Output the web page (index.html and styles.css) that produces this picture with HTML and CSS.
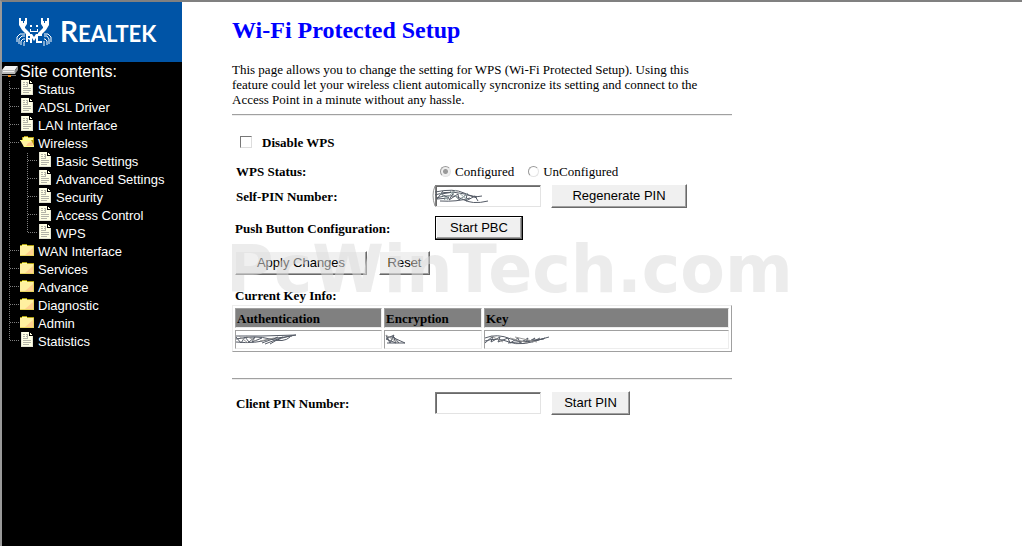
FILE: index.html
```html
<!DOCTYPE html>
<html lang="en">
<head>
<meta charset="utf-8">
<title>Wi-Fi Protected Setup</title>
<link rel="stylesheet" href="styles.css">
</head>
<body>
<svg class="defs" aria-hidden="true">
  <symbol id="page" viewBox="0 0 14 16">
    <path d="M1 0h8v4h4v11H1z" fill="#ffffe4"/>
    <path d="M10 1h1v1h1v1h-2z" fill="#ffffe4"/>
    <path d="M1 0h1v15H1zM12 4h1v11h-1zM1 14h12v1H1z" fill="#e4e4d4"/>
    <path d="M3 2h2v1H3zM6 2h2v1H6zM3 4h2v1H3zM6 4h2v1H6zM3 6h5v1H3zM7 2h1v5H7zM3 8h8v1H3zM3 10h8v1H3zM3 12h6v1H3z" fill="#b4b4a8"/>
  </symbol>
  <symbol id="folder" viewBox="0 0 14 16">
    <path d="M0 3h2V2h5v1h7v11H0z" fill="#b0a010"/>
    <path d="M1 4h12v10H0V4z" fill="#fff0a0"/>
    <path d="M2 3h5v1H2z" fill="#ffff9c"/>
    <path d="M13 6v7H5z" fill="#ffd090"/>
    <path d="M0 13h14v1H0zM13 4h1v10h-1z" fill="#e8d460"/>
  </symbol>
  <symbol id="folder-open" viewBox="0 0 14 16">
    <path d="M2 3h2V2h4v1h6v10H4L2 8z" fill="#b89c10"/>
    <path d="M4 3h4v1h5v2H3V4z" fill="#ffff9c"/>
    <path d="M0 6h11l3 6v1H4z" fill="#fff0a0"/>
    <path d="M8 9l4-1 1 4H6z" fill="#ffc888"/>
    <path d="M0 6h11v1H0zM4 12h10v1H4z" fill="#ffff80"/>
  </symbol>
  <symbol id="drive" viewBox="0 0 16 16">
    <path d="M3 2h13l-3 4H0z" fill="#f2f2f2"/>
    <path d="M0 6h13v4H0z" fill="#b8b8b8"/>
    <path d="M13 6l3-4v4l-3 4z" fill="#888"/>
    <path d="M1 7h11v1H1z" fill="#eee"/>
    <path d="M0 11h14v1H0z" fill="#777"/>
    <path d="M6 11h3v2H6z" fill="#ee8918"/>
  </symbol>
</svg>
<div class="layout">
  <aside class="sidebar">
    <div class="brand">
      <svg class="crab" viewBox="0 0 36 30" role="img" aria-label="Realtek crab">
        <g fill="#fff">
          <path d="M3 1h2v3h2v2h1V4h1V1h2v6l-2 3v1l5 5v2h-3l-5-5-3-5V5z"/>
          <path d="M33 1h-2v3h-2v2h-1V4h-1V1h-2v6l2 3v1l-5 5v2h3l5-5 3-5V5z"/>
          <path d="M14 8h2v2h-2zM20 8h2v2h-2z"/>
          <path d="M14 12h1v2h6v-2h1v3h-8z"/>
          <path d="M10 17h6l2 3 2-3h6v2h-4v5h4v2h-6v-5l-2 3-2-3v5h-2v-3l-2-1v3h-2zM12 19v2h2v-2z" fill-rule="evenodd"/>
        </g>
        <path d="M9 17H4L1 20v5M9 19H6l-3 3v5M9 22H7l-2 2v4M9 24l-1 1v4M28 17h4l3 3v5M28 19h3l2 3v5M28 22h1l2 2v4M28 24v5" fill="none" stroke="#fff"/>
      </svg>
      <span class="wordmark"><span class="wordmark-cap">R</span>EALTEK</span>
    </div>
    <nav class="tree">
      <div class="tree-title"><svg class="icon-drive"><use href="#drive"/></svg>Site contents:</div>
      <ul class="branch">
        <li><a href="#"><svg class="icon"><use href="#page"/></svg>Status</a></li>
        <li><a href="#"><svg class="icon"><use href="#page"/></svg>ADSL Driver</a></li>
        <li><a href="#"><svg class="icon"><use href="#page"/></svg>LAN Interface</a></li>
        <li><a href="#"><svg class="icon"><use href="#folder-open"/></svg>Wireless</a>
          <ul class="branch">
            <li><a href="#"><svg class="icon"><use href="#page"/></svg>Basic Settings</a></li>
            <li><a href="#"><svg class="icon"><use href="#page"/></svg>Advanced Settings</a></li>
            <li><a href="#"><svg class="icon"><use href="#page"/></svg>Security</a></li>
            <li><a href="#"><svg class="icon"><use href="#page"/></svg>Access Control</a></li>
            <li><a href="#"><svg class="icon"><use href="#page"/></svg>WPS</a></li>
          </ul>
        </li>
        <li><a href="#"><svg class="icon"><use href="#folder"/></svg>WAN Interface</a></li>
        <li><a href="#"><svg class="icon"><use href="#folder"/></svg>Services</a></li>
        <li><a href="#"><svg class="icon"><use href="#folder"/></svg>Advance</a></li>
        <li><a href="#"><svg class="icon"><use href="#folder"/></svg>Diagnostic</a></li>
        <li><a href="#"><svg class="icon"><use href="#folder"/></svg>Admin</a></li>
        <li><a href="#"><svg class="icon"><use href="#page"/></svg>Statistics</a></li>
      </ul>
    </nav>
  </aside>
  <main class="content">
    <h1>Wi-Fi Protected Setup</h1>
    <p class="intro">This page allows you to change the setting for WPS (Wi-Fi Protected Setup). Using this feature could let your wireless client automically syncronize its setting and connect to the Access Point in a minute without any hassle.</p>
    <hr>
    <form class="settings">
      <div class="check-row"><input type="checkbox" id="disable"><label class="label" for="disable">Disable WPS</label></div>
      <div class="row status-row" role="group" aria-labelledby="status">
        <span class="label" id="status">WPS Status:</span>
        <div class="radios">
          <input type="radio" id="conf" name="status" checked disabled><label for="conf">Configured</label>
          <input type="radio" id="unconf" name="status" disabled><label for="unconf">UnConfigured</label>
        </div>
      </div>
      <div class="row pin-row">
        <label class="label" for="selfpin">Self-PIN Number:</label>
        <div class="controls">
          <div class="field"><input class="text" type="text" id="selfpin">
            <svg class="scribble-pin" viewBox="0 0 60 22" aria-hidden="true"><path d="M3 1Q-1 10 3 21" stroke="#999"/><path d="M3 7Q22 3 32 8T50 11M3 10Q20 3 45 13M4 13Q20 8 30 14T56 16M8 16Q25 17 38 13M11 6l-6 8 12-1-8-4 13-2-5 8 9-6 1 6 8-6-1 7 9-5 3 5" stroke="#555b66"/><path d="M8 8l8 7M18 6l8 8M27 8l9 7M24 5L12 15M36 8l-8 7" stroke="#9aa"/></svg>
          </div>
          <button type="button" class="btn-regen">Regenerate PIN</button>
        </div>
      </div>
      <div class="row pbc-row">
        <span class="label">Push Button Configuration:</span>
        <div class="controls"><button type="button" class="btn-default">Start PBC</button></div>
      </div>
      <div class="actions">
        <button type="button" class="btn-apply">Apply Changes</button>
        <button type="reset" class="btn-reset">Reset</button>
        <span class="watermark" aria-hidden="true">PcWinTech.com</span>
      </div>
      <table class="keys">
        <caption>Current Key Info:</caption>
        <colgroup><col class="col-auth"><col class="col-enc"><col></colgroup>
        <thead><tr><th>Authentication</th><th>Encryption</th><th>Key</th></tr></thead>
        <tbody><tr>
          <td><svg class="scribble" viewBox="0 0 64 14"><path d="M0 3h26l34-1Q44 4 34 11M0 6Q20 2 34 6T54 4M0 9q20 2 34-3l22-3M0 4l5 6 4-6 4 5 6-5-3 5 10-4M26 10l16-6M29 11l18-7" stroke="#555b66"/><path d="M3 3l9 7M10 3l10 5M24 8l14-3" stroke="#999"/></svg></td>
          <td><svg class="scribble" viewBox="0 0 64 14"><path d="M1 2l4 8 4-8-8 4 10 4-3-7 6 7M2 10h18L9 5M1 4h8" stroke="#555b66"/><path d="M1 2l12 8" stroke="#999"/></svg></td>
          <td><svg class="scribble" viewBox="0 0 64 14"><path d="M0 5q12-5 26 1t38-2M0 8q12-4 24 1t36-4M0 10l8-7-2 6 9-5-2 5 10-4 2 5 8-5 2 5 8-5-2 5 9-5-3 4 8-4M23 10l36-4" stroke="#555b66"/><path d="M30 4l22 5M6 3l12 6M25 5l18 5" stroke="#999"/></svg></td>
        </tr></tbody>
      </table>
      <hr>
      <div class="row client-row">
        <label class="label" for="clientpin">Client PIN Number:</label>
        <div class="controls"><input class="text" type="text" id="clientpin"><button type="button" class="btn-pin">Start PIN</button></div>
      </div>
    </form>
  </main>
</div>
</body>
</html>
```
FILE: styles.css
```css
* { box-sizing: border-box; }
body { margin: 0; background: #fff; color: #000; font: 13px/15px "Liberation Serif", "Times New Roman", serif; }
.defs { display: none; }
.layout { display: flex; min-height: 100vh; border-top: 2px solid #808080; border-left: 2px solid #999; }

.sidebar { flex: none; width: 180px; background: #000; color: #fff; font-family: "Liberation Sans", Arial, sans-serif; }
.brand { display: flex; align-items: center; gap: 8px; height: 60px; padding: 0 14px; background: #0054a6; }
.crab { flex: none; width: 36px; height: 30px; }
.wordmark { font: bold 22px/30px Lato, sans-serif; }
.wordmark-cap { font-size: 28px; }
.tree-title { display: flex; align-items: center; gap: 2px; height: 19px; font-size: 16px; line-height: 19px; }
.icon-drive { width: 16px; height: 16px; }
.branch {
  list-style: none; margin: 0; padding: 0 0 0 18px;
  background: repeating-linear-gradient(#808080 0 1px, transparent 1px 2px) 7px 0 / 1px calc(100% - 10px) no-repeat;
}
.branch a {
  display: flex; align-items: flex-start; gap: 4px; height: 18px; margin-left: -10px; padding-left: 10px;
  color: #fff; text-decoration: none; line-height: 18px;
  background: repeating-linear-gradient(90deg, #808080 0 1px, transparent 1px 2px) 0 7px / 10px 1px no-repeat;
}
.icon { flex: none; width: 14px; height: 16px; margin-top: -1px; }

.content { flex: 0 1 550px; min-width: 0; padding: 14px 0 20px 50px; }
h1 { margin: 0; color: #00f; font-size: 24px; line-height: 28px; }
.intro { margin: 18px 0 7px; padding-right: 20px; }
hr { height: 2px; margin: 0; border: 0; border-top: 1px solid #a0a0a0; border-bottom: 1px solid #ededed; }
.label, caption { font-weight: bold; }
.check-row { display: flex; align-items: center; gap: 10px; height: 18px; margin-top: 17px; padding-left: 8px; }
.row { display: grid; grid-template-columns: 199px 1fr; align-items: center; height: 24px; padding-left: 4px; }
.status-row { margin-top: 8px; }
.controls { display: flex; align-items: center; gap: 10px; }
.radios { display: flex; align-items: center; padding-left: 5px; }
.radios label { margin: 0 14px 0 4px; }

input { margin: 0; appearance: none; background: #fff; }
input[type="checkbox"] { width: 12px; height: 12px; border: 1px solid; border-color: #777 #ddd #ddd #777; }
input[type="radio"] { width: 11px; height: 11px; border: 1px solid; border-color: #999 #e4e4e4 #e4e4e4 #999; border-radius: 50%; }
input[type="radio"]:checked { background: radial-gradient(#999 0 2px, #eee 3px); }
.text { display: block; width: 106px; height: 22px; border: 1px solid; border-color: #808080 #e3e3e3 #e3e3e3 #808080; box-shadow: inset 1px 1px #696969; font: 13px "Liberation Sans", Arial, sans-serif; }
.field { position: relative; }
.scribble-pin { position: absolute; left: -3px; top: 0; width: 60px; height: 22px; fill: none; }

button {
  height: 24px; padding: 0; border: 1px solid; border-color: #fff #696969 #696969 #fff; background: #f0f0f0;
  box-shadow: inset -1px -1px #a0a0a0; color: #000; font: 13px/20px "Liberation Sans", Arial, sans-serif;
}
.btn-regen { width: 136px; }
.btn-default { width: 88px; border-color: #000; box-shadow: inset -1px -1px #696969, inset 1px 1px #fff, inset -2px -2px #a0a0a0; }
.btn-apply { width: 132px; }
.btn-reset { width: 51px; }
.btn-pin { width: 79px; }
.pin-row { margin-top: 1px; }
.pbc-row { margin-top: 8px; padding-left: 3px; grid-template-columns: 200px 1fr; }
.actions { position: relative; display: flex; gap: 12px; margin-top: 11px; padding-left: 3px; }
.watermark { position: absolute; left: -6px; top: -18px; color: rgba(220, 220, 220, .54); font: bold 65px/74px "DejaVu Sans", sans-serif; pointer-events: none; }

.keys { width: 100%; margin-top: 13px; margin-bottom: 26px; table-layout: fixed; border: 1px solid; border-color: #ededed #a0a0a0 #a0a0a0 #ededed; border-spacing: 2px; }
caption { padding: 0 3px 2px; text-align: left; }
.col-auth { width: 147px; }
.col-enc { width: 98px; }
th, td { border: 1px solid; border-color: #a0a0a0 #ededed #ededed #a0a0a0; text-align: left; line-height: 15px; }
th { height: 20px; padding: 1px; background: #808080; }
td { height: 19px; padding: 1px 0; }
.scribble { display: block; width: 64px; height: 14px; fill: none; }
.client-row { margin-top: 11px; }

@media (max-width: 600px) {
  .content { padding-left: 16px; }
  .row { grid-template-columns: 1fr; height: auto; }
}
```
